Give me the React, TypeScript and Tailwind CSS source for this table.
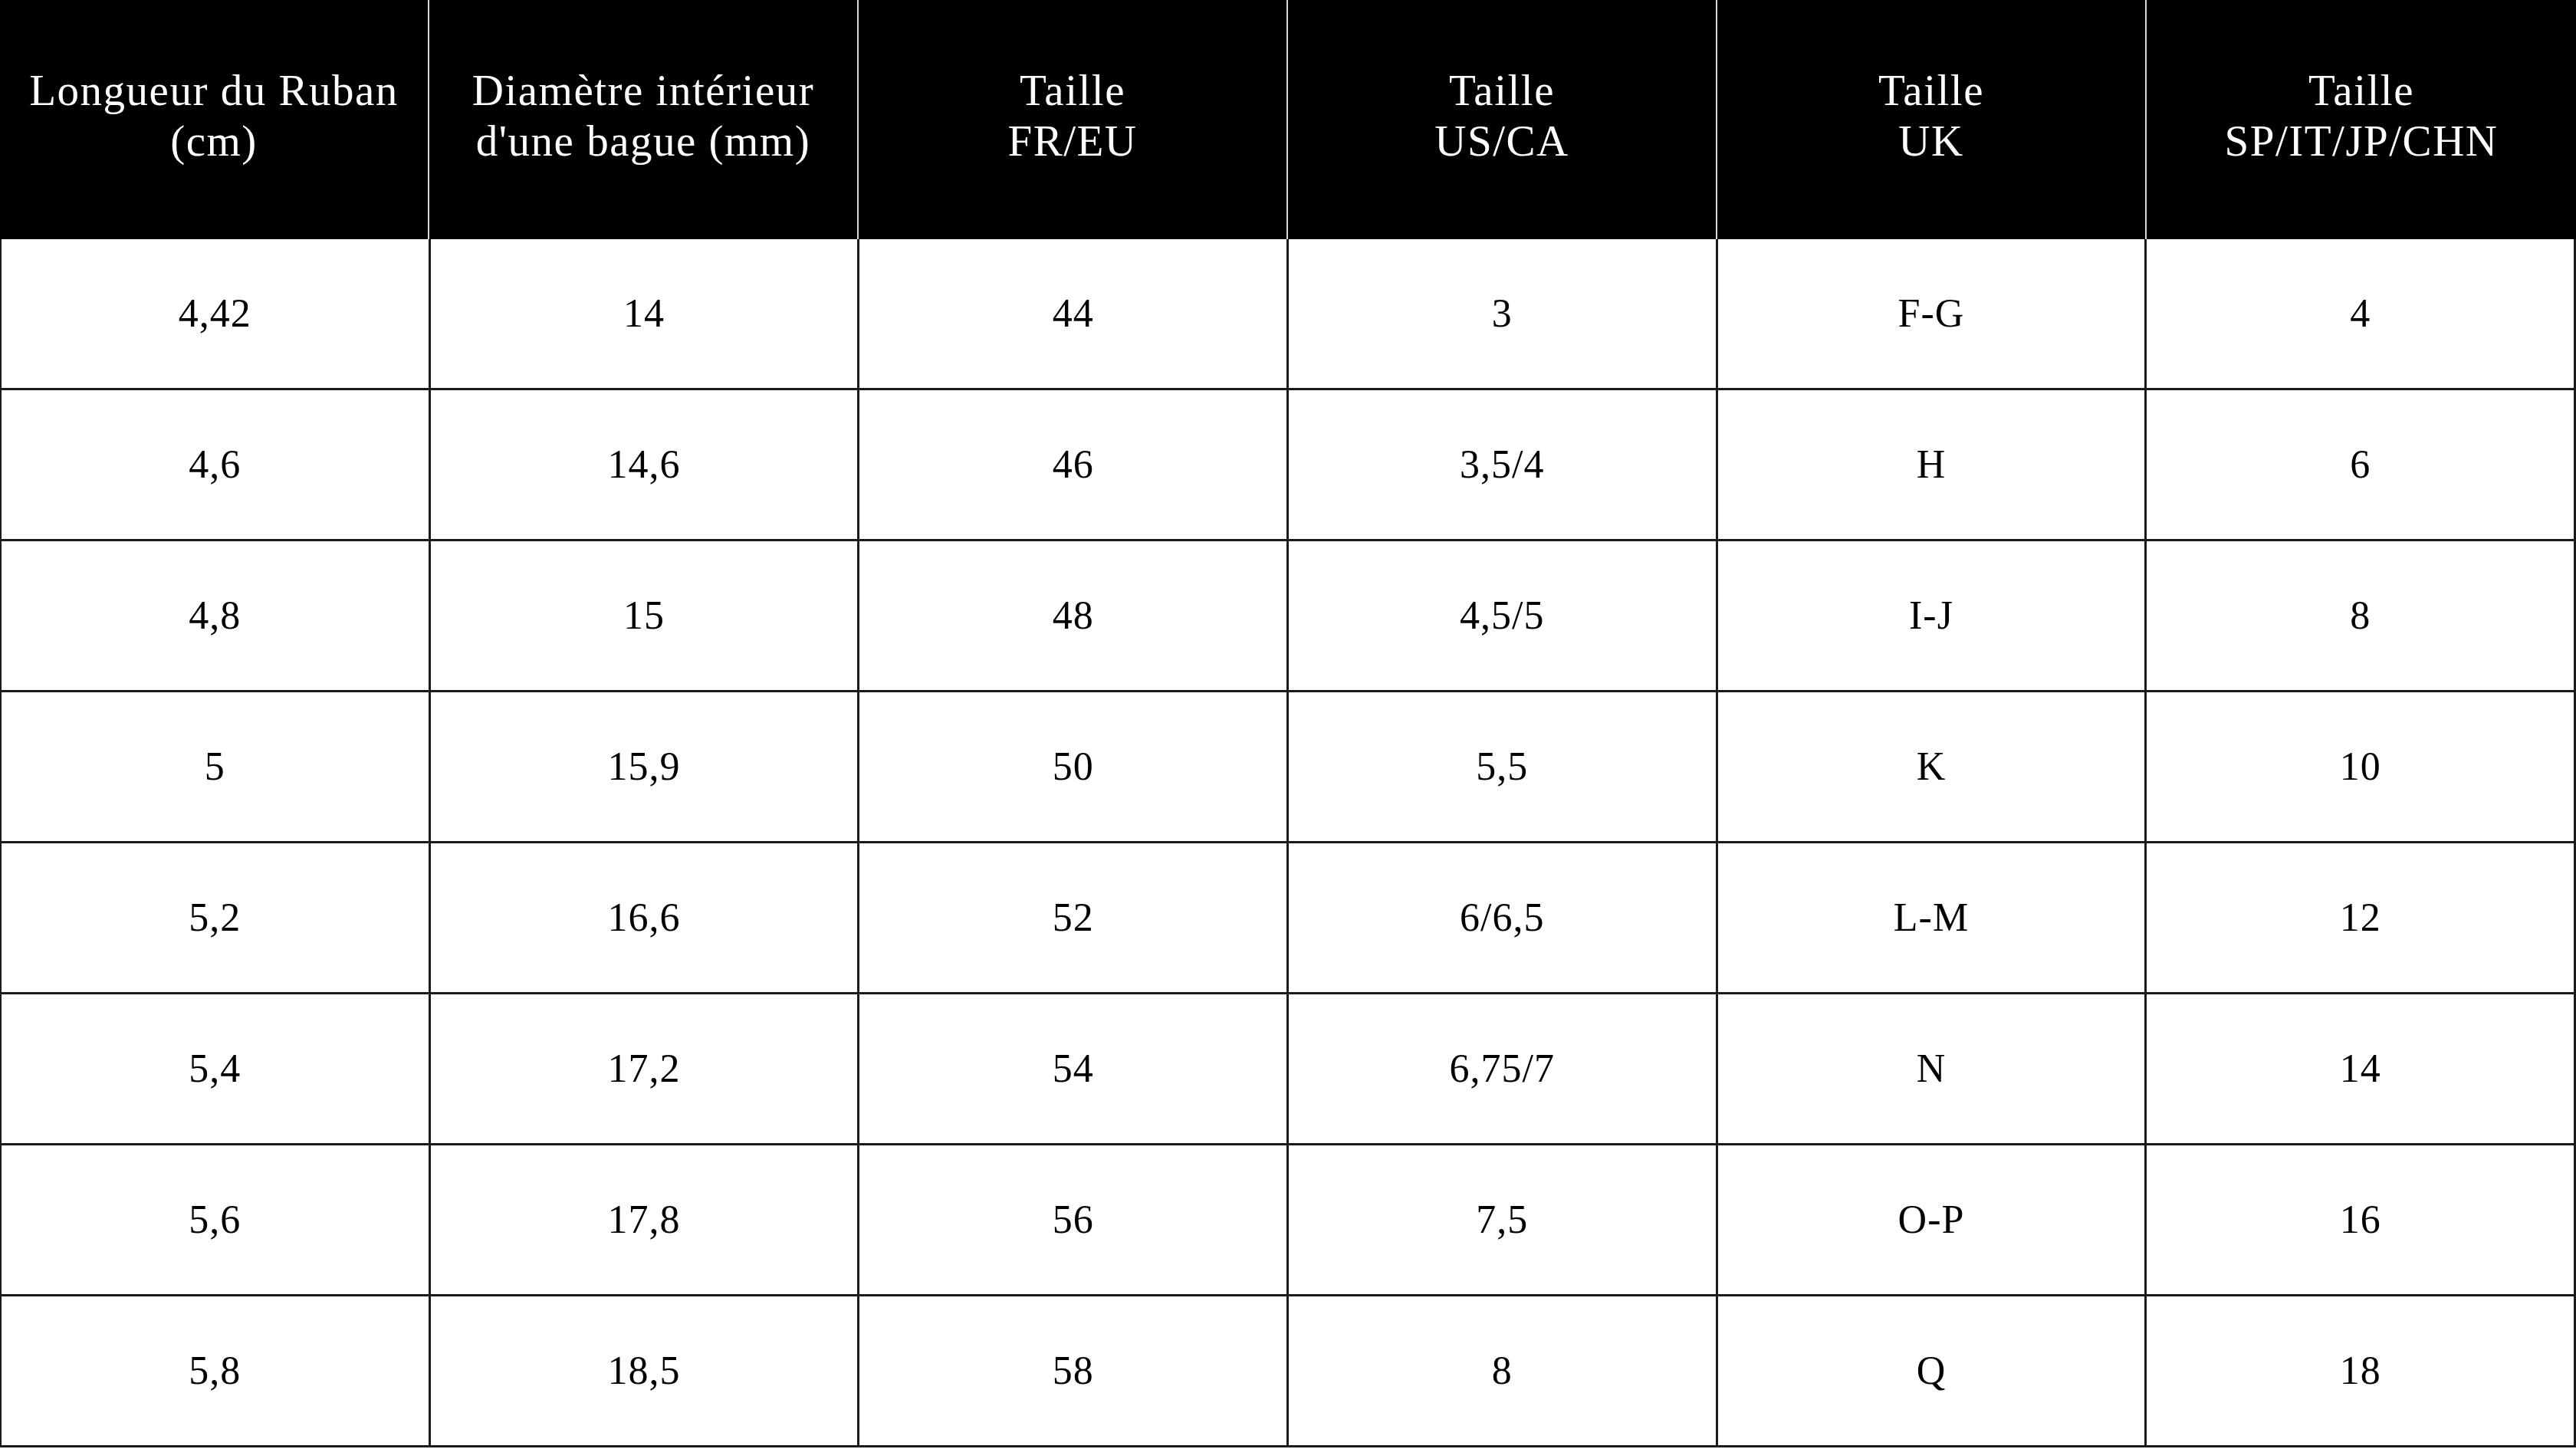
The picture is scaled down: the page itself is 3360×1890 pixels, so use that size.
import React from 'react';

const headers = [
  ['Longueur du Ruban', '(cm)'],
  ['Diamètre intérieur', "d'une bague (mm)"],
  ['Taille', 'FR/EU'],
  ['Taille', 'US/CA'],
  ['Taille', 'UK'],
  ['Taille', 'SP/IT/JP/CHN'],
];

const rows = [
  ['4,42', '14', '44', '3', 'F-G', '4'],
  ['4,6', '14,6', '46', '3,5/4', 'H', '6'],
  ['4,8', '15', '48', '4,5/5', 'I-J', '8'],
  ['5', '15,9', '50', '5,5', 'K', '10'],
  ['5,2', '16,6', '52', '6/6,5', 'L-M', '12'],
  ['5,4', '17,2', '54', '6,75/7', 'N', '14'],
  ['5,6', '17,8', '56', '7,5', 'O-P', '16'],
  ['5,8', '18,5', '58', '8', 'Q', '18'],
];

function App() {
  return (
    <div className="w-[3360px] h-[1890px] bg-white font-['Liberation_Serif',serif] text-[52px] tracking-[1px]">
      {/* header */}
      <div className="grid grid-cols-6 h-[312px] bg-black text-white">
        {headers.map((h, i) => (
          <div
            key={i}
            className={`flex flex-col items-center justify-center pb-[10px] text-[57px] tracking-[1.5px] leading-[66px] ${i < 5 ? 'border-r-2 border-[#d9d9d9]' : ''}`}
          >
            <span>{h[0]}</span>
            <span>{h[1]}</span>
          </div>
        ))}
      </div>

      {/* body */}
      <div className="border-l-2 border-[#1a1a1a]">
        {rows.map((r, ri) => (
          <div key={ri} className="grid grid-cols-6 h-[197px] border-b-[3px] border-[#1a1a1a]">
            {r.map((c, ci) => (
              <div key={ci} className="flex items-center justify-center border-r-[3px] border-[#1a1a1a] text-black">
                {c}
              </div>
            ))}
          </div>
        ))}
      </div>
    </div>
  );
}

export default App;
